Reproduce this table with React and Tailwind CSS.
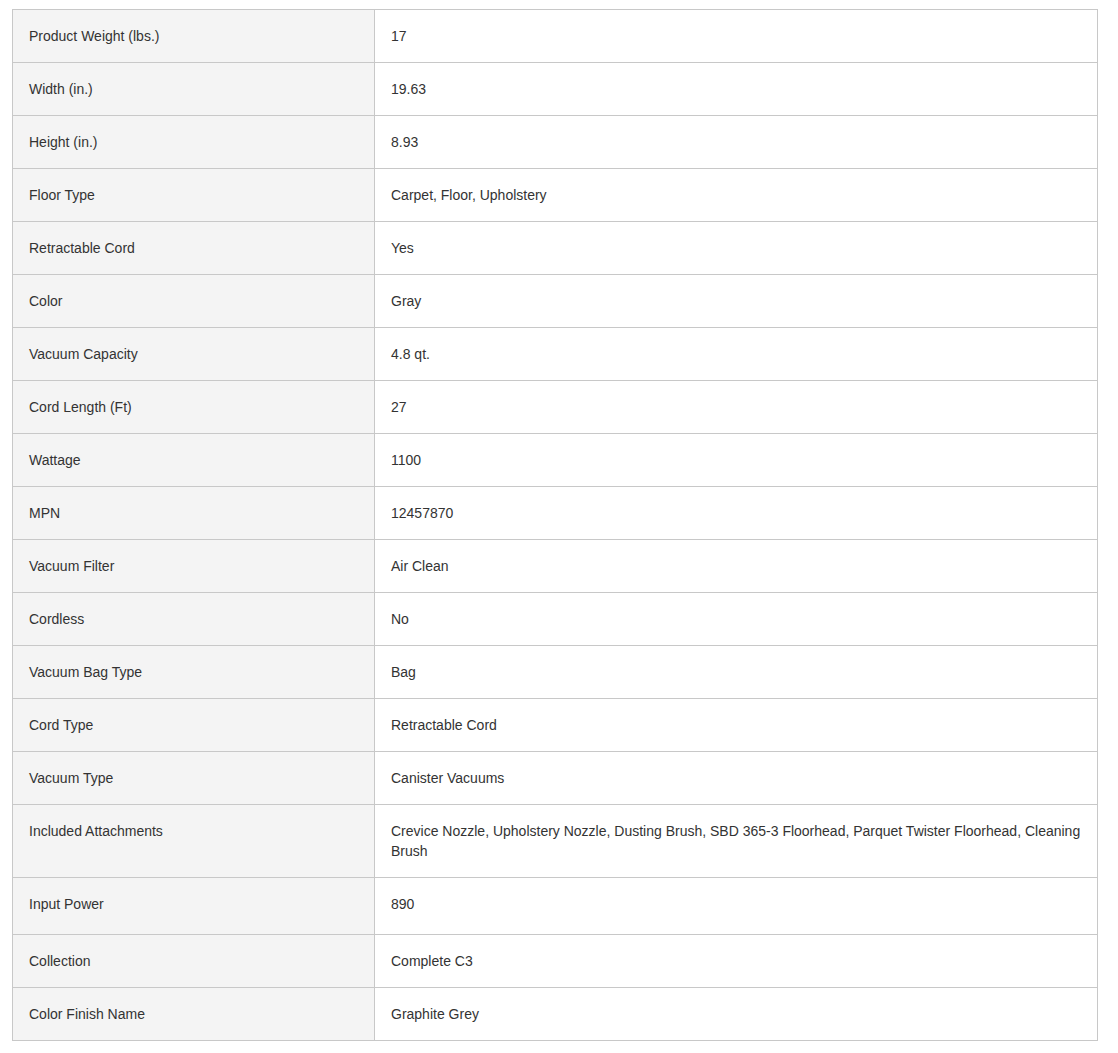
import React from "react";

const specs = [
  ["Product Weight (lbs.)", "17"],
  ["Width (in.)", "19.63"],
  ["Height (in.)", "8.93"],
  ["Floor Type", "Carpet, Floor, Upholstery"],
  ["Retractable Cord", "Yes"],
  ["Color", "Gray"],
  ["Vacuum Capacity", "4.8 qt."],
  ["Cord Length (Ft)", "27"],
  ["Wattage", "1100"],
  ["MPN", "12457870"],
  ["Vacuum Filter", "Air Clean"],
  ["Cordless", "No"],
  ["Vacuum Bag Type", "Bag"],
  ["Cord Type", "Retractable Cord"],
  ["Vacuum Type", "Canister Vacuums"],
  [
    "Included Attachments",
    "Crevice Nozzle, Upholstery Nozzle, Dusting Brush, SBD 365-3 Floorhead, Parquet Twister Floorhead, Cleaning Brush",
  ],
  ["Input Power", "890", "h-[57px]"],
  ["Collection", "Complete C3"],
  ["Color Finish Name", "Graphite Grey"],
];

function SpecRow({ label, value, rowClass }) {
  return (
    <tr className={rowClass}>
      <td className="w-[362px] border border-[#c8c8c8] bg-[#f4f4f4] px-4 py-4 align-top">
        {label}
      </td>
      <td className="border border-[#c8c8c8] bg-white px-4 py-4 align-top">
        {value}
      </td>
    </tr>
  );
}

export default function App() {
  return (
    <div className="min-h-[1053px] bg-white pl-3 pt-[9px] font-['Liberation_Sans',Arial,sans-serif] text-[14px] leading-5 text-[#333]">
      <table className="w-[1086px] table-fixed border-collapse">
        <tbody>
          {specs.map(([label, value, rowClass]) => (
            <SpecRow
              key={label}
              label={label}
              value={value}
              rowClass={rowClass}
            />
          ))}
        </tbody>
      </table>
    </div>
  );
}
